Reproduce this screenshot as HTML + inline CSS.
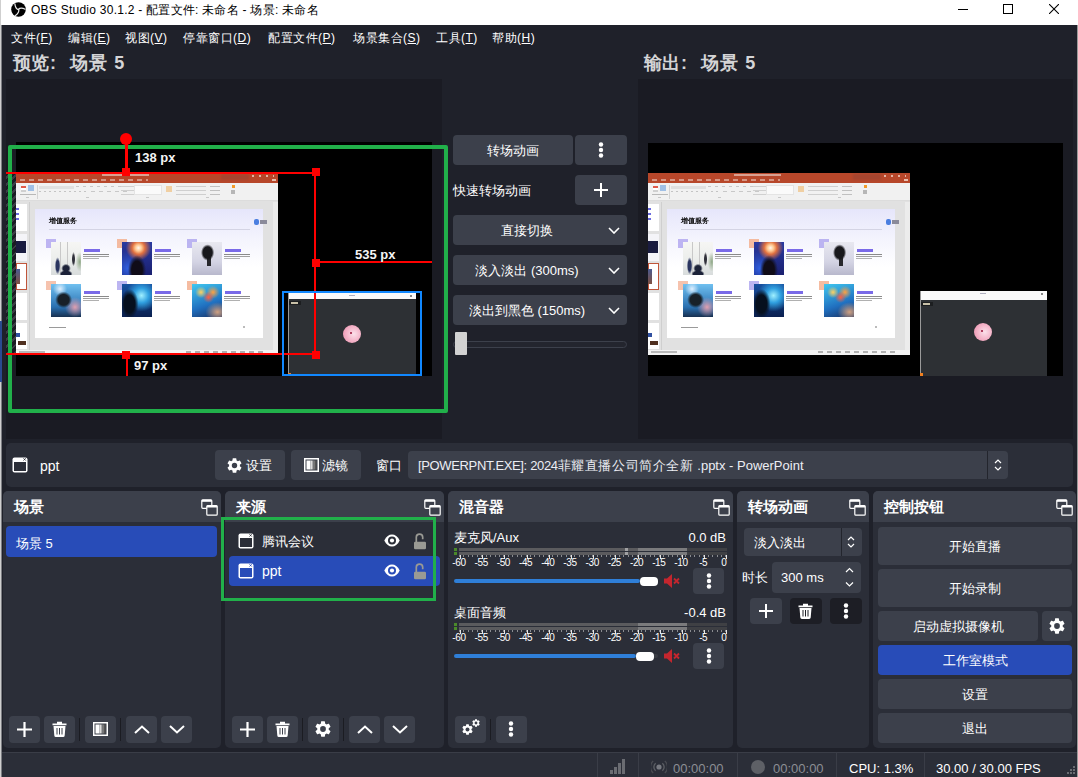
<!DOCTYPE html><html><head><meta charset="utf-8"><style>*{box-sizing:border-box;margin:0;padding:0}
html,body{width:1078px;height:777px;overflow:hidden;background:#1f212a}
body{position:relative;font-family:"Liberation Sans",sans-serif;color:#fff;font-size:12px}
.a{position:absolute}
.btn{position:absolute;background:#3c404b;border-radius:4px}
.t{position:absolute;white-space:nowrap;line-height:1;padding-top:1px}
.lbl{position:absolute;white-space:nowrap;font-size:13px;font-weight:bold;color:#f4f4f4;line-height:13px;text-shadow:0 0 2px #000}
.dock{position:absolute;top:491px;height:257px;background:#2b2e38;border-radius:5px;overflow:hidden}
.dt{position:absolute;left:0;right:0;top:0;height:31px;background:#3c404b}
.dtt{position:absolute;top:8px;font-size:15px;font-weight:bold;line-height:1;color:#fff}
.m{position:absolute;white-space:nowrap;font-size:12px;color:#fff;line-height:13px;top:32px;letter-spacing:0.5px}
</style></head><body>
<div class="a" style="left:0;top:0;width:1px;height:777px;background:#cfcfcf"></div><div class="a" style="left:1px;top:0;width:1px;height:777px;background:#7c7d82"></div><div class="a" style="left:0;top:321px;width:2px;height:61px;background:#2a4a90"></div><div class="a" style="left:1077px;top:0;width:1px;height:777px;background:#9a9a9a"></div><div class="a" style="left:0;top:0;width:1078px;height:25px;background:#fff"></div><div class="a" style="left:0;top:0;width:1px;height:25px;background:#cfcfcf"></div><svg class="a" style="left:11px;top:2px" width="15" height="15" viewBox="-7.5 -7.5 15 15"><circle r="7.3" fill="#000"/><g fill="none" stroke="#e8e8e8" stroke-width="1.2" stroke-linecap="round"><path id="bl" d="M0 0.3Q-3.2 -0.8 -3.6 -5.6"/><use href="#bl" transform="rotate(120)"/><use href="#bl" transform="rotate(240)"/></g></svg><div class="t" style="left:31px;top:3px;font-size:12px;color:#000;line-height:13px;letter-spacing:0.25px">OBS Studio 30.1.2 - 配置文件: 未命名 - 场景: 未命名</div><div class="a" style="left:958px;top:9px;width:10px;height:1px;background:#000"></div><div class="a" style="left:1003px;top:4px;width:10px;height:10px;border:1px solid #000"></div><svg class="a" style="left:1049px;top:4px" width="10" height="10" viewBox="0 0 10 10"><path d="M0 0L10 10M10 0L0 10" stroke="#000" stroke-width="1.1"/></svg><div class="m" style="left:11px">文件(<u>F</u>)</div><div class="m" style="left:68px">编辑(<u>E</u>)</div><div class="m" style="left:125px">视图(<u>V</u>)</div><div class="m" style="left:183px">停靠窗口(<u>D</u>)</div><div class="m" style="left:268px">配置文件(<u>P</u>)</div><div class="m" style="left:353px">场景集合(<u>S</u>)</div><div class="m" style="left:436px">工具(<u>T</u>)</div><div class="m" style="left:492px">帮助(<u>H</u>)</div><div class="t" style="left:13px;top:53px;font-size:18px;font-weight:bold;color:#d4d4d6;line-height:18px;letter-spacing:0.4px">预览</div><div class="t" style="left:50px;top:53px;font-size:18px;font-weight:bold;color:#d4d4d6;line-height:18px;letter-spacing:0.4px">:</div><div class="t" style="left:70px;top:53px;font-size:18px;font-weight:bold;color:#d4d4d6;line-height:18px;letter-spacing:1.1px">场景 5</div><div class="t" style="left:644px;top:53px;font-size:18px;font-weight:bold;color:#d4d4d6;line-height:18px;letter-spacing:0.4px">输出</div><div class="t" style="left:681px;top:53px;font-size:18px;font-weight:bold;color:#d4d4d6;line-height:18px;letter-spacing:0.4px">:</div><div class="t" style="left:701px;top:53px;font-size:18px;font-weight:bold;color:#d4d4d6;line-height:18px;letter-spacing:1.1px">场景 5</div><div class="a" style="left:6px;top:79px;width:436px;height:360px;background:#1a1b23"></div><div class="a" style="left:638px;top:79px;width:435px;height:360px;background:#1a1b23"></div><div class="a" style="left:16px;top:142px;width:416px;height:234px;background:#000"></div><div class="a" style="left:648px;top:143px;width:415px;height:233px;background:#000"></div>
<div class="a" style="left:16px;top:142px;width:416px;height:234px;overflow:hidden"><div class="a" style="left:0px;top:31px;width:262px;height:182px;overflow:hidden;background:#e1e1e1;filter:blur(0.3px)"><div class="a" style="left:0px;top:0px;width:262px;height:10px;background:#b7472a"></div><div class="a" style="left:86px;top:1px;width:47px;height:2px;background:#d9a090"></div><div class="a" style="left:4px;top:6px;width:128px;height:2px;background:repeating-linear-gradient(90deg,#d69684 0 5px,transparent 5px 9px)"></div><div class="a" style="left:205px;top:1px;width:28px;height:6px;background:#a5452f;filter:blur(1px)"></div><div class="a" style="left:236px;top:2px;width:22px;height:2px;background:repeating-linear-gradient(90deg,#e4b4a4 0 2px,transparent 2px 7px)"></div><div class="a" style="left:256px;top:6px;width:4px;height:2px;background:#e8c0b0"></div><div class="a" style="left:0px;top:10px;width:262px;height:18px;background:#f1f1f1"></div><div class="a" style="left:5px;top:13px;width:5px;height:6px;background:linear-gradient(#e05a4a 0 30%,#fff 30% 60%,#d0d0d0 60%)"></div><div class="a" style="left:12px;top:12px;width:6px;height:6px;background:#6aa0e0;opacity:.6"></div><div class="a" style="left:4px;top:21px;width:16px;height:1px;background:#b8b8b8"></div><div class="a" style="left:21px;top:12px;width:1px;height:14px;background:#d4d4d4"></div><div class="a" style="left:23px;top:13px;width:35px;height:3px;background:#e0e0e0"></div><div class="a" style="left:23px;top:18px;width:50px;height:1px;background:repeating-linear-gradient(90deg,#c4c4c4 0 2px,transparent 2px 5px)"></div><div class="a" style="left:60px;top:13px;width:45px;height:1px;background:repeating-linear-gradient(90deg,#c8c8c8 0 3px,transparent 3px 7px)"></div><div class="a" style="left:75px;top:18px;width:40px;height:1px;background:repeating-linear-gradient(90deg,#c8c8c8 0 4px,transparent 4px 8px)"></div><div class="a" style="left:105px;top:13px;width:30px;height:9px;background:repeating-linear-gradient(180deg,#d0d0d0 0 1px,transparent 1px 4px)"></div><div class="a" style="left:118px;top:12px;width:28px;height:10px;background:#fafafa;border:1px solid #e4e4e4"></div><div class="a" style="left:150px;top:13px;width:6px;height:6px;background:#f0c080;opacity:.7"></div><div class="a" style="left:160px;top:13px;width:30px;height:9px;background:repeating-linear-gradient(180deg,#cfcfcf 0 1px,transparent 1px 4px)"></div><div class="a" style="left:194px;top:13px;width:10px;height:9px;background:repeating-linear-gradient(180deg,#c0c0c0 0 1px,transparent 1px 4px)"></div><div class="a" style="left:216px;top:12px;width:3px;height:3px;background:#f39a2a"></div><div class="a" style="left:215px;top:17px;width:4px;height:4px;background:#909090;opacity:.6"></div><div class="a" style="left:10px;top:24px;width:240px;height:1px;background:repeating-linear-gradient(90deg,#c8c8c8 0 3px,transparent 3px 60px)"></div><div class="a" style="left:0px;top:27px;width:262px;height:1px;background:#dcdcdc"></div><div class="a" style="left:0px;top:31px;width:11px;height:27px;background:#fff"></div><div class="a" style="left:0px;top:35px;width:3px;height:14px;background:repeating-linear-gradient(180deg,#6a6adf 0 2px,transparent 2px 5px)"></div><div class="a" style="left:0px;top:61px;width:11px;height:27px;background:#f4f4f8"></div><div class="a" style="left:0px;top:68px;width:10px;height:12px;background:#1a1c40"></div><div class="a" style="left:0px;top:90px;width:11px;height:27px;background:#fff;border:1px solid #c0553a"></div><div class="a" style="left:0px;top:96px;width:4px;height:15px;background:linear-gradient(#4a5a90,#805040)"></div><div class="a" style="left:0px;top:120px;width:11px;height:27px;background:#fff"></div><div class="a" style="left:0px;top:150px;width:11px;height:26px;background:#fff"></div><div class="a" style="left:0px;top:160px;width:4px;height:4px;background:#3050a0"></div><div class="a" style="left:2px;top:168px;width:8px;height:4px;background:#503020"></div><div class="a" style="left:13px;top:29px;width:1px;height:148px;background:#cfcfcf"></div><div class="a" style="left:257px;top:29px;width:5px;height:148px;background:#ececec"></div><div class="a" style="left:19px;top:36px;width:228px;height:129px;background:linear-gradient(180deg,#e6e6fb 0%,#f3f3fd 22%,#fff 45%,#fff 100%)"><div class="t" style="left:14px;top:7px;font-size:7px;line-height:8px;font-weight:bold;color:#000">增值服务</div><div class="a" style="left:14px;top:20px;width:201px;height:1px;background:#d4d4e4"></div><div class="a" style="left:219px;top:10px;width:5px;height:6px;background:#4a7ee0;border-radius:2px"></div><div class="a" style="left:225px;top:11px;width:7px;height:4px;background:#8a8a9a"></div><div class="a" style="left:10.6px;top:29.5px;width:10px;height:9px;background:#b3a8f0;opacity:.85"></div><div class="a" style="left:15.6px;top:32.5px;width:30px;height:33px;background:radial-gradient(ellipse 16% 14% at 50% 80%,#1c2238 0,#1c2238 60%,transparent 100%),radial-gradient(ellipse 22% 12% at 50% 97%,#1c2238 0,#1c2238 70%,transparent 100%),radial-gradient(ellipse 9% 26% at 22% 72%,#2a3560 0,#2a3560 60%,transparent 100%),radial-gradient(ellipse 6% 22% at 75% 52%,#30303a 0,#30303a 55%,transparent 100%),radial-gradient(ellipse 14% 30% at 96% 60%,#90a888 0,transparent 100%),linear-gradient(90deg,transparent 30%,#c8c8c8 30% 32%,transparent 32% 55%,#c8c8c8 55% 57%,transparent 57%),linear-gradient(180deg,#f6f6f4 0%,#eceeec 50%,#d8dcdc 100%)"></div><div class="a" style="left:48.6px;top:39.5px;width:16px;height:3px;background:#7a6ae8"></div><div class="a" style="left:47.6px;top:44.5px;width:26px;height:1px;background:#8a8a8a"></div><div class="a" style="left:47.6px;top:46.5px;width:26px;height:1px;background:#a0a0a0"></div><div class="a" style="left:47.6px;top:48.5px;width:16px;height:1px;background:#b0b0b0"></div><div class="a" style="left:82.0px;top:29.5px;width:10px;height:9px;background:#f3b090;opacity:.85"></div><div class="a" style="left:87.0px;top:32.5px;width:30px;height:33px;background:radial-gradient(ellipse 30% 45% at 50% 85%,#100c18 0,#100c18 60%,transparent 100%),radial-gradient(circle at 55% 18%,#fff8f0 0,#ffc890 10%,#e07040 20%,transparent 40%),radial-gradient(circle at 20% 80%,#3060e0 0,transparent 50%),linear-gradient(180deg,#2a3aa0,#1a2070)"></div><div class="a" style="left:120.0px;top:39.5px;width:16px;height:3px;background:#7a6ae8"></div><div class="a" style="left:119.0px;top:44.5px;width:26px;height:1px;background:#8a8a8a"></div><div class="a" style="left:119.0px;top:46.5px;width:26px;height:1px;background:#a0a0a0"></div><div class="a" style="left:119.0px;top:48.5px;width:16px;height:1px;background:#b0b0b0"></div><div class="a" style="left:152.0px;top:29.5px;width:10px;height:9px;background:#b0a8ee;opacity:.85"></div><div class="a" style="left:157.0px;top:32.5px;width:30px;height:33px;background:radial-gradient(ellipse 22% 25% at 52% 32%,#18181c 0,#18181c 70%,transparent 100%),linear-gradient(90deg,transparent 50%,#28282c 50%,#28282c 62%,transparent 62%) 0 60%/100% 40% no-repeat,linear-gradient(180deg,#e8e8f0 0%,#d4d4e4 60%,#b8b8cc 100%)"></div><div class="a" style="left:190.0px;top:39.5px;width:16px;height:3px;background:#7a6ae8"></div><div class="a" style="left:189.0px;top:44.5px;width:26px;height:1px;background:#8a8a8a"></div><div class="a" style="left:189.0px;top:46.5px;width:26px;height:1px;background:#a0a0a0"></div><div class="a" style="left:189.0px;top:48.5px;width:16px;height:1px;background:#b0b0b0"></div><div class="a" style="left:10.6px;top:72.0px;width:10px;height:9px;background:#f4b8a0;opacity:.85"></div><div class="a" style="left:15.6px;top:75.0px;width:30px;height:33px;background:radial-gradient(ellipse 28% 25% at 42% 48%,#182028 0,#182028 65%,transparent 100%),radial-gradient(circle at 30% 15%,#e0f0ff 0,transparent 20%),radial-gradient(circle at 80% 70%,#e0a0b0 0,transparent 30%),linear-gradient(180deg,#70c0f0,#2a70b0 70%,#183050)"></div><div class="a" style="left:48.6px;top:82.0px;width:16px;height:3px;background:#7a6ae8"></div><div class="a" style="left:47.6px;top:87.0px;width:26px;height:1px;background:#8a8a8a"></div><div class="a" style="left:47.6px;top:89.0px;width:26px;height:1px;background:#a0a0a0"></div><div class="a" style="left:47.6px;top:91.0px;width:16px;height:1px;background:#b0b0b0"></div><div class="a" style="left:82.0px;top:72.0px;width:10px;height:9px;background:#b0a8ef;opacity:.85"></div><div class="a" style="left:87.0px;top:75.0px;width:30px;height:33px;background:radial-gradient(ellipse 30% 45% at 25% 60%,#06101e 0,#06101e 60%,transparent 100%),radial-gradient(circle at 65% 35%,#a0f0ff 0,#30a0e0 25%,transparent 55%),linear-gradient(180deg,#1850a0,#0a2050)"></div><div class="a" style="left:120.0px;top:82.0px;width:16px;height:3px;background:#7a6ae8"></div><div class="a" style="left:119.0px;top:87.0px;width:26px;height:1px;background:#8a8a8a"></div><div class="a" style="left:119.0px;top:89.0px;width:26px;height:1px;background:#a0a0a0"></div><div class="a" style="left:119.0px;top:91.0px;width:16px;height:1px;background:#b0b0b0"></div><div class="a" style="left:152.0px;top:72.0px;width:10px;height:9px;background:#f3b090;opacity:.85"></div><div class="a" style="left:157.0px;top:75.0px;width:30px;height:33px;background:radial-gradient(circle at 30% 25%,#ffd060 0,transparent 18%),radial-gradient(circle at 55% 40%,#ff6040 0,transparent 22%),radial-gradient(circle at 70% 25%,#ffa040 0,transparent 20%),radial-gradient(ellipse 40% 30% at 85% 85%,#d0a080 0,transparent 100%),linear-gradient(160deg,#40c8f0,#2070c0 60%,#1a3060)"></div><div class="a" style="left:190.0px;top:82.0px;width:16px;height:3px;background:#7a6ae8"></div><div class="a" style="left:189.0px;top:87.0px;width:26px;height:1px;background:#8a8a8a"></div><div class="a" style="left:189.0px;top:89.0px;width:26px;height:1px;background:#a0a0a0"></div><div class="a" style="left:189.0px;top:91.0px;width:16px;height:1px;background:#b0b0b0"></div><div class="a" style="left:14px;top:118px;width:17px;height:1px;background:#9a9a9a"></div><div class="a" style="left:208px;top:117px;width:2px;height:2px;background:#bbb"></div></div><div class="a" style="left:0px;top:177px;width:262px;height:5px;background:#f3f3f3"></div><div class="a" style="left:3px;top:178px;width:26px;height:2px;background:#b8b8b8"></div><div class="a" style="left:170px;top:178px;width:80px;height:2px;background:repeating-linear-gradient(90deg,#b0b0b0 0 5px,transparent 5px 9px)"></div></div><div class="a" style="left:272px;top:151px;width:128px;height:83px;background:#2d3034;overflow:hidden"><div class="a" style="left:0px;top:0px;width:128px;height:6px;background:#fafafa"></div><div class="a" style="left:0px;top:0px;width:1px;height:83px;background:#9a9a9a"></div><div class="a" style="left:61px;top:2px;width:6px;height:1px;background:#b0b0c0"></div><div class="a" style="left:122px;top:2px;width:2px;height:2px;background:#888"></div><div class="a" style="left:1px;top:8px;width:12px;height:4px;background:#1c1e20"></div><div class="a" style="left:3px;top:9px;width:7px;height:2px;background:#c8c0a8"></div><div class="a" style="left:55px;top:32px;width:18px;height:18px;border-radius:50%;background:radial-gradient(circle at 60% 50%,#fbe0ea 0,#f5b8cc 45%,#e88aa8 100%)"></div><div class="a" style="left:62px;top:39px;width:2px;height:2px;background:#b04060"></div><div class="a" style="left:0px;top:80px;width:3px;height:3px;background:#f08020"></div></div></div><div class="a" style="left:6px;top:172px;width:10px;height:182px;background:repeating-linear-gradient(135deg,#1a1b23 0 3px,#3b3d45 3px 5px)"></div><div class="a" style="left:8px;top:145px;width:440px;height:268px;border:4px solid #21b04a;border-radius:2px"></div><div class="a" style="left:6px;top:172px;width:310px;height:2px;background:#f00"></div><div class="a" style="left:6px;top:353px;width:310px;height:2px;background:#f00"></div><div class="a" style="left:314px;top:172px;width:2px;height:183px;background:#f00"></div><div class="a" style="left:316px;top:261px;width:116px;height:2px;background:#f00"></div><div class="a" style="left:125px;top:140px;width:3px;height:33px;background:#f00"></div><div class="a" style="left:126px;top:355px;width:2px;height:21px;background:#f00"></div><div class="a" style="left:120px;top:133px;width:12px;height:12px;border-radius:50%;background:#f00"></div><div class="a" style="left:122px;top:168px;width:8px;height:8px;background:#f00"></div><div class="a" style="left:312px;top:168px;width:8px;height:8px;background:#f00"></div><div class="a" style="left:312px;top:259px;width:8px;height:8px;background:#f00"></div><div class="a" style="left:122px;top:351px;width:8px;height:8px;background:#f00"></div><div class="a" style="left:312px;top:351px;width:8px;height:8px;background:#f00"></div><div class="a" style="left:282px;top:291px;width:140px;height:85px;border:2px solid #1188ff"></div><div class="lbl" style="left:135px;top:151px">138 px</div><div class="lbl" style="left:355px;top:248px">535 px</div><div class="lbl" style="left:134px;top:359px">97 px</div><div class="a" style="left:648px;top:143px;width:415px;height:233px;overflow:hidden"><div class="a" style="left:0px;top:30px;width:262px;height:182px;overflow:hidden;background:#e1e1e1;filter:blur(0.3px)"><div class="a" style="left:0px;top:0px;width:262px;height:10px;background:#b7472a"></div><div class="a" style="left:86px;top:1px;width:47px;height:2px;background:#d9a090"></div><div class="a" style="left:4px;top:6px;width:128px;height:2px;background:repeating-linear-gradient(90deg,#d69684 0 5px,transparent 5px 9px)"></div><div class="a" style="left:205px;top:1px;width:28px;height:6px;background:#a5452f;filter:blur(1px)"></div><div class="a" style="left:236px;top:2px;width:22px;height:2px;background:repeating-linear-gradient(90deg,#e4b4a4 0 2px,transparent 2px 7px)"></div><div class="a" style="left:256px;top:6px;width:4px;height:2px;background:#e8c0b0"></div><div class="a" style="left:0px;top:10px;width:262px;height:18px;background:#f1f1f1"></div><div class="a" style="left:5px;top:13px;width:5px;height:6px;background:linear-gradient(#e05a4a 0 30%,#fff 30% 60%,#d0d0d0 60%)"></div><div class="a" style="left:12px;top:12px;width:6px;height:6px;background:#6aa0e0;opacity:.6"></div><div class="a" style="left:4px;top:21px;width:16px;height:1px;background:#b8b8b8"></div><div class="a" style="left:21px;top:12px;width:1px;height:14px;background:#d4d4d4"></div><div class="a" style="left:23px;top:13px;width:35px;height:3px;background:#e0e0e0"></div><div class="a" style="left:23px;top:18px;width:50px;height:1px;background:repeating-linear-gradient(90deg,#c4c4c4 0 2px,transparent 2px 5px)"></div><div class="a" style="left:60px;top:13px;width:45px;height:1px;background:repeating-linear-gradient(90deg,#c8c8c8 0 3px,transparent 3px 7px)"></div><div class="a" style="left:75px;top:18px;width:40px;height:1px;background:repeating-linear-gradient(90deg,#c8c8c8 0 4px,transparent 4px 8px)"></div><div class="a" style="left:105px;top:13px;width:30px;height:9px;background:repeating-linear-gradient(180deg,#d0d0d0 0 1px,transparent 1px 4px)"></div><div class="a" style="left:118px;top:12px;width:28px;height:10px;background:#fafafa;border:1px solid #e4e4e4"></div><div class="a" style="left:150px;top:13px;width:6px;height:6px;background:#f0c080;opacity:.7"></div><div class="a" style="left:160px;top:13px;width:30px;height:9px;background:repeating-linear-gradient(180deg,#cfcfcf 0 1px,transparent 1px 4px)"></div><div class="a" style="left:194px;top:13px;width:10px;height:9px;background:repeating-linear-gradient(180deg,#c0c0c0 0 1px,transparent 1px 4px)"></div><div class="a" style="left:216px;top:12px;width:3px;height:3px;background:#f39a2a"></div><div class="a" style="left:215px;top:17px;width:4px;height:4px;background:#909090;opacity:.6"></div><div class="a" style="left:10px;top:24px;width:240px;height:1px;background:repeating-linear-gradient(90deg,#c8c8c8 0 3px,transparent 3px 60px)"></div><div class="a" style="left:0px;top:27px;width:262px;height:1px;background:#dcdcdc"></div><div class="a" style="left:0px;top:31px;width:11px;height:27px;background:#fff"></div><div class="a" style="left:0px;top:35px;width:3px;height:14px;background:repeating-linear-gradient(180deg,#6a6adf 0 2px,transparent 2px 5px)"></div><div class="a" style="left:0px;top:61px;width:11px;height:27px;background:#f4f4f8"></div><div class="a" style="left:0px;top:68px;width:10px;height:12px;background:#1a1c40"></div><div class="a" style="left:0px;top:90px;width:11px;height:27px;background:#fff;border:1px solid #c0553a"></div><div class="a" style="left:0px;top:96px;width:4px;height:15px;background:linear-gradient(#4a5a90,#805040)"></div><div class="a" style="left:0px;top:120px;width:11px;height:27px;background:#fff"></div><div class="a" style="left:0px;top:150px;width:11px;height:26px;background:#fff"></div><div class="a" style="left:0px;top:160px;width:4px;height:4px;background:#3050a0"></div><div class="a" style="left:2px;top:168px;width:8px;height:4px;background:#503020"></div><div class="a" style="left:13px;top:29px;width:1px;height:148px;background:#cfcfcf"></div><div class="a" style="left:257px;top:29px;width:5px;height:148px;background:#ececec"></div><div class="a" style="left:19px;top:36px;width:228px;height:129px;background:linear-gradient(180deg,#e6e6fb 0%,#f3f3fd 22%,#fff 45%,#fff 100%)"><div class="t" style="left:14px;top:7px;font-size:7px;line-height:8px;font-weight:bold;color:#000">增值服务</div><div class="a" style="left:14px;top:20px;width:201px;height:1px;background:#d4d4e4"></div><div class="a" style="left:219px;top:10px;width:5px;height:6px;background:#4a7ee0;border-radius:2px"></div><div class="a" style="left:225px;top:11px;width:7px;height:4px;background:#8a8a9a"></div><div class="a" style="left:10.6px;top:29.5px;width:10px;height:9px;background:#b3a8f0;opacity:.85"></div><div class="a" style="left:15.6px;top:32.5px;width:30px;height:33px;background:radial-gradient(ellipse 16% 14% at 50% 80%,#1c2238 0,#1c2238 60%,transparent 100%),radial-gradient(ellipse 22% 12% at 50% 97%,#1c2238 0,#1c2238 70%,transparent 100%),radial-gradient(ellipse 9% 26% at 22% 72%,#2a3560 0,#2a3560 60%,transparent 100%),radial-gradient(ellipse 6% 22% at 75% 52%,#30303a 0,#30303a 55%,transparent 100%),radial-gradient(ellipse 14% 30% at 96% 60%,#90a888 0,transparent 100%),linear-gradient(90deg,transparent 30%,#c8c8c8 30% 32%,transparent 32% 55%,#c8c8c8 55% 57%,transparent 57%),linear-gradient(180deg,#f6f6f4 0%,#eceeec 50%,#d8dcdc 100%)"></div><div class="a" style="left:48.6px;top:39.5px;width:16px;height:3px;background:#7a6ae8"></div><div class="a" style="left:47.6px;top:44.5px;width:26px;height:1px;background:#8a8a8a"></div><div class="a" style="left:47.6px;top:46.5px;width:26px;height:1px;background:#a0a0a0"></div><div class="a" style="left:47.6px;top:48.5px;width:16px;height:1px;background:#b0b0b0"></div><div class="a" style="left:82.0px;top:29.5px;width:10px;height:9px;background:#f3b090;opacity:.85"></div><div class="a" style="left:87.0px;top:32.5px;width:30px;height:33px;background:radial-gradient(ellipse 30% 45% at 50% 85%,#100c18 0,#100c18 60%,transparent 100%),radial-gradient(circle at 55% 18%,#fff8f0 0,#ffc890 10%,#e07040 20%,transparent 40%),radial-gradient(circle at 20% 80%,#3060e0 0,transparent 50%),linear-gradient(180deg,#2a3aa0,#1a2070)"></div><div class="a" style="left:120.0px;top:39.5px;width:16px;height:3px;background:#7a6ae8"></div><div class="a" style="left:119.0px;top:44.5px;width:26px;height:1px;background:#8a8a8a"></div><div class="a" style="left:119.0px;top:46.5px;width:26px;height:1px;background:#a0a0a0"></div><div class="a" style="left:119.0px;top:48.5px;width:16px;height:1px;background:#b0b0b0"></div><div class="a" style="left:152.0px;top:29.5px;width:10px;height:9px;background:#b0a8ee;opacity:.85"></div><div class="a" style="left:157.0px;top:32.5px;width:30px;height:33px;background:radial-gradient(ellipse 22% 25% at 52% 32%,#18181c 0,#18181c 70%,transparent 100%),linear-gradient(90deg,transparent 50%,#28282c 50%,#28282c 62%,transparent 62%) 0 60%/100% 40% no-repeat,linear-gradient(180deg,#e8e8f0 0%,#d4d4e4 60%,#b8b8cc 100%)"></div><div class="a" style="left:190.0px;top:39.5px;width:16px;height:3px;background:#7a6ae8"></div><div class="a" style="left:189.0px;top:44.5px;width:26px;height:1px;background:#8a8a8a"></div><div class="a" style="left:189.0px;top:46.5px;width:26px;height:1px;background:#a0a0a0"></div><div class="a" style="left:189.0px;top:48.5px;width:16px;height:1px;background:#b0b0b0"></div><div class="a" style="left:10.6px;top:72.0px;width:10px;height:9px;background:#f4b8a0;opacity:.85"></div><div class="a" style="left:15.6px;top:75.0px;width:30px;height:33px;background:radial-gradient(ellipse 28% 25% at 42% 48%,#182028 0,#182028 65%,transparent 100%),radial-gradient(circle at 30% 15%,#e0f0ff 0,transparent 20%),radial-gradient(circle at 80% 70%,#e0a0b0 0,transparent 30%),linear-gradient(180deg,#70c0f0,#2a70b0 70%,#183050)"></div><div class="a" style="left:48.6px;top:82.0px;width:16px;height:3px;background:#7a6ae8"></div><div class="a" style="left:47.6px;top:87.0px;width:26px;height:1px;background:#8a8a8a"></div><div class="a" style="left:47.6px;top:89.0px;width:26px;height:1px;background:#a0a0a0"></div><div class="a" style="left:47.6px;top:91.0px;width:16px;height:1px;background:#b0b0b0"></div><div class="a" style="left:82.0px;top:72.0px;width:10px;height:9px;background:#b0a8ef;opacity:.85"></div><div class="a" style="left:87.0px;top:75.0px;width:30px;height:33px;background:radial-gradient(ellipse 30% 45% at 25% 60%,#06101e 0,#06101e 60%,transparent 100%),radial-gradient(circle at 65% 35%,#a0f0ff 0,#30a0e0 25%,transparent 55%),linear-gradient(180deg,#1850a0,#0a2050)"></div><div class="a" style="left:120.0px;top:82.0px;width:16px;height:3px;background:#7a6ae8"></div><div class="a" style="left:119.0px;top:87.0px;width:26px;height:1px;background:#8a8a8a"></div><div class="a" style="left:119.0px;top:89.0px;width:26px;height:1px;background:#a0a0a0"></div><div class="a" style="left:119.0px;top:91.0px;width:16px;height:1px;background:#b0b0b0"></div><div class="a" style="left:152.0px;top:72.0px;width:10px;height:9px;background:#f3b090;opacity:.85"></div><div class="a" style="left:157.0px;top:75.0px;width:30px;height:33px;background:radial-gradient(circle at 30% 25%,#ffd060 0,transparent 18%),radial-gradient(circle at 55% 40%,#ff6040 0,transparent 22%),radial-gradient(circle at 70% 25%,#ffa040 0,transparent 20%),radial-gradient(ellipse 40% 30% at 85% 85%,#d0a080 0,transparent 100%),linear-gradient(160deg,#40c8f0,#2070c0 60%,#1a3060)"></div><div class="a" style="left:190.0px;top:82.0px;width:16px;height:3px;background:#7a6ae8"></div><div class="a" style="left:189.0px;top:87.0px;width:26px;height:1px;background:#8a8a8a"></div><div class="a" style="left:189.0px;top:89.0px;width:26px;height:1px;background:#a0a0a0"></div><div class="a" style="left:189.0px;top:91.0px;width:16px;height:1px;background:#b0b0b0"></div><div class="a" style="left:14px;top:118px;width:17px;height:1px;background:#9a9a9a"></div><div class="a" style="left:208px;top:117px;width:2px;height:2px;background:#bbb"></div></div><div class="a" style="left:0px;top:177px;width:262px;height:5px;background:#f3f3f3"></div><div class="a" style="left:3px;top:178px;width:26px;height:2px;background:#b8b8b8"></div><div class="a" style="left:170px;top:178px;width:80px;height:2px;background:repeating-linear-gradient(90deg,#b0b0b0 0 5px,transparent 5px 9px)"></div></div><div class="a" style="left:272px;top:148px;width:127px;height:85px;background:#2d3034;overflow:hidden"><div class="a" style="left:0px;top:0px;width:127px;height:9px;background:#fafafa"></div><div class="a" style="left:0px;top:0px;width:1px;height:85px;background:#9a9a9a"></div><div class="a" style="left:60px;top:2px;width:6px;height:1px;background:#b0b0c0"></div><div class="a" style="left:121px;top:2px;width:2px;height:2px;background:#888"></div><div class="a" style="left:1px;top:11px;width:12px;height:4px;background:#1c1e20"></div><div class="a" style="left:3px;top:12px;width:7px;height:2px;background:#c8c0a8"></div><div class="a" style="left:54px;top:32px;width:18px;height:18px;border-radius:50%;background:radial-gradient(circle at 60% 50%,#fbe0ea 0,#f5b8cc 45%,#e88aa8 100%)"></div><div class="a" style="left:61px;top:39px;width:2px;height:2px;background:#b04060"></div><div class="a" style="left:0px;top:82px;width:3px;height:3px;background:#f08020"></div></div></div>
<div class="btn" style="left:453px;top:135px;width:120px;height:30px"></div><div class="t" style="left:453px;top:143px;width:120px;text-align:center;font-size:13px;color:#fff;line-height:14px">转场动画</div><div class="btn" style="left:575px;top:135px;width:52px;height:30px"></div><svg class="a" style="left:598px;top:142px" width="6" height="16" viewBox="0 0 6 16"><circle cx="3" cy="2.5" r="2.2" fill="#fff"/><circle cx="3" cy="8.0" r="2.2" fill="#fff"/><circle cx="3" cy="13.5" r="2.2" fill="#fff"/></svg><div class="t" style="left:453px;top:183px;font-size:13px;color:#fff;line-height:14px">快速转场动画</div><div class="btn" style="left:575px;top:175px;width:52px;height:30px"></div><svg class="a" style="left:594px;top:183px" width="14" height="14" viewBox="0 0 14 14"><path d="M7.0 0V14M0 7.0H14" stroke="#fff" stroke-width="2"/></svg><div class="btn" style="left:453px;top:215px;width:174px;height:30px"></div><div class="t" style="left:453px;top:223px;width:148px;text-align:center;font-size:13px;color:#fff;line-height:14px">直接切换</div><svg class="a" style="left:608px;top:227px" width="12" height="7" viewBox="0 0 12 7"><path d="M1 1L6 6L11 1" fill="none" stroke="#fff" stroke-width="1.6"/></svg><div class="btn" style="left:453px;top:255px;width:174px;height:30px"></div><div class="t" style="left:453px;top:263px;width:148px;text-align:center;font-size:13px;color:#fff;line-height:14px">淡入淡出 (300ms)</div><svg class="a" style="left:608px;top:267px" width="12" height="7" viewBox="0 0 12 7"><path d="M1 1L6 6L11 1" fill="none" stroke="#fff" stroke-width="1.6"/></svg><div class="btn" style="left:453px;top:295px;width:174px;height:30px"></div><div class="t" style="left:453px;top:303px;width:148px;text-align:center;font-size:13px;color:#fff;line-height:14px">淡出到黑色 (150ms)</div><svg class="a" style="left:608px;top:307px" width="12" height="7" viewBox="0 0 12 7"><path d="M1 1L6 6L11 1" fill="none" stroke="#fff" stroke-width="1.6"/></svg><div class="a" style="left:453px;top:341px;width:174px;height:7px;border:1px solid #3c404b;border-radius:4px;background:#23252e"></div><div class="a" style="left:455px;top:332px;width:12px;height:23px;background:#d2d2d2;border-radius:1px"></div>
<div class="a" style="left:6px;top:443px;width:1067px;height:44px;background:#2b2e38;border-radius:5px"></div><svg class="a" style="left:12px;top:457px" width="16" height="16" viewBox="0 0 16 16"><rect x="0.5" y="0.5" width="15" height="15" rx="2" fill="#fff"/><rect x="2" y="5" width="12" height="9" fill="#2b2e38"/><path d="M11.5 1.3L13.7 3.5M13.7 1.3L11.5 3.5" stroke="#2b2e38" stroke-width="0.9"/></svg><div class="t" style="left:40px;top:458px;font-size:14px;color:#fff;line-height:15px">ppt</div><div class="btn" style="left:215px;top:450px;width:70px;height:30px"></div><svg class="a" style="left:227px;top:458px" width="15" height="15" viewBox="2 2 20 20"><path fill="#fff" d="M19.14 12.94c.04-.3.06-.61.06-.94 0-.32-.02-.64-.07-.94l2.03-1.58a.49.49 0 0 0 .12-.61l-1.92-3.32a.49.49 0 0 0-.59-.22l-2.39.96c-.5-.38-1.03-.7-1.62-.94l-.36-2.54a.48.48 0 0 0-.48-.41h-3.84c-.24 0-.43.17-.47.41l-.36 2.54c-.59.24-1.13.57-1.62.94l-2.39-.96a.48.48 0 0 0-.59.22L2.74 8.87c-.12.21-.08.47.12.61l2.03 1.58c-.05.3-.09.63-.09.94s.02.64.07.94l-2.03 1.58a.49.49 0 0 0-.12.61l1.92 3.32c.12.22.37.29.59.22l2.39-.96c.5.38 1.03.7 1.62.94l.36 2.54c.05.24.24.41.48.41h3.84c.24 0 .44-.17.47-.41l.36-2.54c.59-.24 1.13-.56 1.62-.94l2.39.96c.22.08.47 0 .59-.22l1.92-3.32c.12-.22.07-.47-.12-.61l-2.01-1.58z"/><circle cx="12" cy="12" r="3.6" fill="#3c404b"/></svg><div class="t" style="left:246px;top:458px;font-size:13px;color:#fff;line-height:14px">设置</div><div class="btn" style="left:291px;top:450px;width:70px;height:30px"></div><svg class="a" style="left:304px;top:458px" width="15" height="14" viewBox="0 0 15 14"><rect x="0.75" y="0.75" width="13.5" height="12.5" fill="none" stroke="#fff" stroke-width="1.5"/><rect x="2.5" y="2.5" width="4" height="9" fill="#fff"/><rect x="6.5" y="2.5" width="1.5" height="9" fill="#ddd"/><rect x="8" y="2.5" width="1.5" height="9" fill="#aaa"/><rect x="9.5" y="2.5" width="1.5" height="9" fill="#777"/><rect x="11" y="2.5" width="1.5" height="9" fill="#555"/></svg><div class="t" style="left:322px;top:458px;font-size:13px;color:#fff;line-height:14px">滤镜</div><div class="t" style="left:376px;top:458px;font-size:13px;color:#fff;line-height:14px">窗口</div><div class="btn" style="left:408px;top:451px;width:600px;height:28px"></div><div class="a" style="left:987px;top:451px;width:1px;height:28px;background:#23252d"></div><svg class="a" style="left:994px;top:458px" width="8" height="14" viewBox="0 0 8 14"><path d="M1 5L4 2L7 5M1 9L4 12L7 9" fill="none" stroke="#fff" stroke-width="1.2"/></svg><div class="t" style="left:418px;top:458px;font-size:13px;color:#eceef4;line-height:14px"><span style="letter-spacing:-0.35px">[POWERPNT.EXE]: 2024</span><span style="letter-spacing:0.6px">菲耀直播公司简介全新</span> .pptx - PowerPoint</div>
<div class="dock" style="left:3px;width:218px"><div class="dt"></div><div class="dtt" style="left:11px">场景</div></div><svg class="a" style="left:201px;top:499px" width="17" height="17" viewBox="0 0 17 17"><rect x="0.8" y="0.8" width="10" height="8.5" rx="1" fill="none" stroke="#fff" stroke-width="1.2"/><rect x="0.8" y="0.8" width="10" height="2" fill="#fff"/><rect x="5.8" y="6.5" width="10.4" height="9.7" rx="1" fill="#3c404b" stroke="#fff" stroke-width="1.2"/><rect x="5.8" y="6.5" width="10.4" height="2" fill="#fff"/></svg><div class="a" style="left:6px;top:526px;width:211px;height:31px;background:#284cb8;border-radius:4px"></div><div class="t" style="left:16px;top:536px;font-size:13px;color:#fff;line-height:14px;">场景 5</div><div class="btn" style="left:9px;top:716px;width:31px;height:27px"></div><div class="btn" style="left:44px;top:716px;width:31px;height:27px"></div><div class="btn" style="left:85px;top:716px;width:31px;height:27px"></div><div class="btn" style="left:126px;top:716px;width:31px;height:27px"></div><div class="btn" style="left:161px;top:716px;width:31px;height:27px"></div><svg class="a" style="left:17px;top:722px" width="15" height="15" viewBox="0 0 15 15"><path d="M7.5 0V15M0 7.5H15" stroke="#fff" stroke-width="2.2"/></svg><svg class="a" style="left:52px;top:721px" width="15" height="16" viewBox="0 0 15 16"><path d="M5 0.8h5v1.6h4.5v1.8h-14v-1.8h4.5z" fill="#fff"/><path d="M1.5 5h12l-0.8 9.5a1.6 1.6 0 0 1-1.6 1.5h-7.2a1.6 1.6 0 0 1-1.6-1.5z" fill="#fff"/><path d="M5 7v6.5M7.5 7v6.5M10 7v6.5" stroke="#3c404b" stroke-width="1"/></svg><div class="a" style="left:79px;top:718px;width:1px;height:23px;background:#1b1c22"></div><svg class="a" style="left:93px;top:722px" width="15" height="14" viewBox="0 0 15 14"><rect x="0.75" y="0.75" width="13.5" height="12.5" fill="none" stroke="#fff" stroke-width="1.5"/><rect x="2.5" y="2.5" width="4" height="9" fill="#fff"/><rect x="6.5" y="2.5" width="1.5" height="9" fill="#ddd"/><rect x="8" y="2.5" width="1.5" height="9" fill="#aaa"/><rect x="9.5" y="2.5" width="1.5" height="9" fill="#777"/><rect x="11" y="2.5" width="1.5" height="9" fill="#555"/></svg><div class="a" style="left:120px;top:718px;width:1px;height:23px;background:#1b1c22"></div><svg class="a" style="left:134px;top:725px" width="16" height="9" viewBox="0 0 16 9"><path d="M1 8L8 1.5L15 8" fill="none" stroke="#fff" stroke-width="2"/></svg><svg class="a" style="left:169px;top:725px" width="16" height="9" viewBox="0 0 16 9"><path d="M1 1L8 7.5L15 1" fill="none" stroke="#fff" stroke-width="2"/></svg><div class="dock" style="left:225px;width:219px"><div class="dt"></div><div class="dtt" style="left:11px">来源</div></div><svg class="a" style="left:424px;top:499px" width="17" height="17" viewBox="0 0 17 17"><rect x="0.8" y="0.8" width="10" height="8.5" rx="1" fill="none" stroke="#fff" stroke-width="1.2"/><rect x="0.8" y="0.8" width="10" height="2" fill="#fff"/><rect x="5.8" y="6.5" width="10.4" height="9.7" rx="1" fill="#3c404b" stroke="#fff" stroke-width="1.2"/><rect x="5.8" y="6.5" width="10.4" height="2" fill="#fff"/></svg><div class="a" style="left:229px;top:556px;width:211px;height:30px;background:#284cb8;border-radius:4px"></div><svg class="a" style="left:238px;top:533px" width="16" height="16" viewBox="0 0 16 16"><rect x="0.5" y="0.5" width="15" height="15" rx="2" fill="#fff"/><rect x="2" y="5" width="12" height="9" fill="#2b2e38"/><path d="M11.5 1.3L13.7 3.5M13.7 1.3L11.5 3.5" stroke="#2b2e38" stroke-width="0.9"/></svg><div class="t" style="left:262px;top:534px;font-size:13px;color:#fff;line-height:14px;">腾讯会议</div><svg class="a" style="left:384px;top:534px" width="16" height="13" viewBox="0 0 16 13"><path d="M0.3 6.5C2.3 2.3 5 0.5 8 0.5S13.7 2.3 15.7 6.5C13.7 10.7 11 12.5 8 12.5S2.3 10.7 0.3 6.5Z" fill="#fff"/><circle cx="8" cy="6.5" r="4" fill="#2b2e38"/><circle cx="8" cy="6.5" r="2.1" fill="#fff"/></svg><svg class="a" style="left:413px;top:533px" width="14" height="17" viewBox="0 0 14 17"><path d="M3.3 9V4.3a3.2 3.2 0 0 1 6.4 0V6.3" fill="none" stroke="#9a9a94" stroke-width="1.7"/><rect x="1" y="8.7" width="12" height="7.5" rx="1.2" fill="#9a9a94"/></svg><svg class="a" style="left:238px;top:563px" width="16" height="16" viewBox="0 0 16 16"><rect x="0.5" y="0.5" width="15" height="15" rx="2" fill="#fff"/><rect x="2" y="5" width="12" height="9" fill="#284cb8"/><path d="M11.5 1.3L13.7 3.5M13.7 1.3L11.5 3.5" stroke="#284cb8" stroke-width="0.9"/></svg><div class="t" style="left:262px;top:563px;font-size:14px;color:#fff;line-height:15px;">ppt</div><svg class="a" style="left:384px;top:564px" width="16" height="13" viewBox="0 0 16 13"><path d="M0.3 6.5C2.3 2.3 5 0.5 8 0.5S13.7 2.3 15.7 6.5C13.7 10.7 11 12.5 8 12.5S2.3 10.7 0.3 6.5Z" fill="#fff"/><circle cx="8" cy="6.5" r="4" fill="#284cb8"/><circle cx="8" cy="6.5" r="2.1" fill="#fff"/></svg><svg class="a" style="left:413px;top:563px" width="14" height="17" viewBox="0 0 14 17"><path d="M3.3 9V4.3a3.2 3.2 0 0 1 6.4 0V6.3" fill="none" stroke="#9a9a94" stroke-width="1.7"/><rect x="1" y="8.7" width="12" height="7.5" rx="1.2" fill="#9a9a94"/></svg><div class="a" style="left:221px;top:517px;width:215px;height:84px;border:3.5px solid #21b04a"></div><div class="btn" style="left:232px;top:716px;width:31px;height:27px"></div><div class="btn" style="left:267px;top:716px;width:31px;height:27px"></div><div class="btn" style="left:308px;top:716px;width:31px;height:27px"></div><div class="btn" style="left:349px;top:716px;width:31px;height:27px"></div><div class="btn" style="left:384px;top:716px;width:31px;height:27px"></div><svg class="a" style="left:240px;top:722px" width="15" height="15" viewBox="0 0 15 15"><path d="M7.5 0V15M0 7.5H15" stroke="#fff" stroke-width="2.2"/></svg><svg class="a" style="left:275px;top:721px" width="15" height="16" viewBox="0 0 15 16"><path d="M5 0.8h5v1.6h4.5v1.8h-14v-1.8h4.5z" fill="#fff"/><path d="M1.5 5h12l-0.8 9.5a1.6 1.6 0 0 1-1.6 1.5h-7.2a1.6 1.6 0 0 1-1.6-1.5z" fill="#fff"/><path d="M5 7v6.5M7.5 7v6.5M10 7v6.5" stroke="#3c404b" stroke-width="1"/></svg><div class="a" style="left:302px;top:718px;width:1px;height:23px;background:#1b1c22"></div><svg class="a" style="left:315px;top:721px" width="16" height="16" viewBox="2 2 20 20"><path fill="#fff" d="M19.14 12.94c.04-.3.06-.61.06-.94 0-.32-.02-.64-.07-.94l2.03-1.58a.49.49 0 0 0 .12-.61l-1.92-3.32a.49.49 0 0 0-.59-.22l-2.39.96c-.5-.38-1.03-.7-1.62-.94l-.36-2.54a.48.48 0 0 0-.48-.41h-3.84c-.24 0-.43.17-.47.41l-.36 2.54c-.59.24-1.13.57-1.62.94l-2.39-.96a.48.48 0 0 0-.59.22L2.74 8.87c-.12.21-.08.47.12.61l2.03 1.58c-.05.3-.09.63-.09.94s.02.64.07.94l-2.03 1.58a.49.49 0 0 0-.12.61l1.92 3.32c.12.22.37.29.59.22l2.39-.96c.5.38 1.03.7 1.62.94l.36 2.54c.05.24.24.41.48.41h3.84c.24 0 .44-.17.47-.41l.36-2.54c.59-.24 1.13-.56 1.62-.94l2.39.96c.22.08.47 0 .59-.22l1.92-3.32c.12-.22.07-.47-.12-.61l-2.01-1.58z"/><circle cx="12" cy="12" r="3.6" fill="#3c404b"/></svg><div class="a" style="left:343px;top:718px;width:1px;height:23px;background:#1b1c22"></div><svg class="a" style="left:357px;top:725px" width="16" height="9" viewBox="0 0 16 9"><path d="M1 8L8 1.5L15 8" fill="none" stroke="#fff" stroke-width="2"/></svg><svg class="a" style="left:392px;top:725px" width="16" height="9" viewBox="0 0 16 9"><path d="M1 1L8 7.5L15 1" fill="none" stroke="#fff" stroke-width="2"/></svg><div class="dock" style="left:448px;width:285px"><div class="dt"></div><div class="dtt" style="left:11px">混音器</div></div><svg class="a" style="left:713px;top:499px" width="17" height="17" viewBox="0 0 17 17"><rect x="0.8" y="0.8" width="10" height="8.5" rx="1" fill="none" stroke="#fff" stroke-width="1.2"/><rect x="0.8" y="0.8" width="10" height="2" fill="#fff"/><rect x="5.8" y="6.5" width="10.4" height="9.7" rx="1" fill="#3c404b" stroke="#fff" stroke-width="1.2"/><rect x="5.8" y="6.5" width="10.4" height="2" fill="#fff"/></svg><div class="t" style="left:454px;top:530px;font-size:13px;color:#fff;line-height:14px;">麦克风/Aux</div><div class="t" style="left:626px;top:530px;width:100px;text-align:right;font-size:13px;color:#fff;line-height:14px">0.0 dB</div><div class="a" style="left:454px;top:548px;width:3px;height:3px;background:#4a8a2a"></div><div class="a" style="left:459px;top:548px;width:166px;height:3px;background:#5b5b5e"></div><div class="a" style="left:625px;top:548px;width:3px;height:3px;background:#a0a0a2"></div><div class="a" style="left:628px;top:548px;width:10px;height:3px;background:#5b5b5e"></div><div class="a" style="left:638px;top:548px;width:49px;height:3px;background:#7b7b7d"></div><div class="a" style="left:687px;top:548px;width:40px;height:3px;background:#3f4044"></div><div class="a" style="left:454px;top:552px;width:3px;height:3px;background:#4a8a2a"></div><div class="a" style="left:459px;top:552px;width:166px;height:3px;background:#5b5b5e"></div><div class="a" style="left:625px;top:552px;width:3px;height:3px;background:#a0a0a2"></div><div class="a" style="left:628px;top:552px;width:10px;height:3px;background:#5b5b5e"></div><div class="a" style="left:638px;top:552px;width:49px;height:3px;background:#7b7b7d"></div><div class="a" style="left:687px;top:552px;width:40px;height:3px;background:#3f4044"></div><div class="a" style="left:459px;top:555px;width:268px;height:2px;background:repeating-linear-gradient(90deg,#8a8c90 0 1px,transparent 1px 4.44px)"></div><div class="a" style="left:460.0px;top:555px;width:1px;height:3.5px;background:#e6e6e6"></div><div class="t" style="left:444.0px;top:557px;width:30px;text-align:center;font-size:10px;letter-spacing:-0.4px;color:#fff;line-height:10px">-60</div><div class="a" style="left:482.2px;top:555px;width:1px;height:3.5px;background:#e6e6e6"></div><div class="t" style="left:466.2px;top:557px;width:30px;text-align:center;font-size:10px;letter-spacing:-0.4px;color:#fff;line-height:10px">-55</div><div class="a" style="left:504.4px;top:555px;width:1px;height:3.5px;background:#e6e6e6"></div><div class="t" style="left:488.4px;top:557px;width:30px;text-align:center;font-size:10px;letter-spacing:-0.4px;color:#fff;line-height:10px">-50</div><div class="a" style="left:526.6px;top:555px;width:1px;height:3.5px;background:#e6e6e6"></div><div class="t" style="left:510.6px;top:557px;width:30px;text-align:center;font-size:10px;letter-spacing:-0.4px;color:#fff;line-height:10px">-45</div><div class="a" style="left:548.8px;top:555px;width:1px;height:3.5px;background:#e6e6e6"></div><div class="t" style="left:532.8px;top:557px;width:30px;text-align:center;font-size:10px;letter-spacing:-0.4px;color:#fff;line-height:10px">-40</div><div class="a" style="left:571.0px;top:555px;width:1px;height:3.5px;background:#e6e6e6"></div><div class="t" style="left:555.0px;top:557px;width:30px;text-align:center;font-size:10px;letter-spacing:-0.4px;color:#fff;line-height:10px">-35</div><div class="a" style="left:593.2px;top:555px;width:1px;height:3.5px;background:#e6e6e6"></div><div class="t" style="left:577.2px;top:557px;width:30px;text-align:center;font-size:10px;letter-spacing:-0.4px;color:#fff;line-height:10px">-30</div><div class="a" style="left:615.4px;top:555px;width:1px;height:3.5px;background:#e6e6e6"></div><div class="t" style="left:599.4px;top:557px;width:30px;text-align:center;font-size:10px;letter-spacing:-0.4px;color:#fff;line-height:10px">-25</div><div class="a" style="left:637.6px;top:555px;width:1px;height:3.5px;background:#e6e6e6"></div><div class="t" style="left:621.6px;top:557px;width:30px;text-align:center;font-size:10px;letter-spacing:-0.4px;color:#fff;line-height:10px">-20</div><div class="a" style="left:659.8px;top:555px;width:1px;height:3.5px;background:#e6e6e6"></div><div class="t" style="left:643.8px;top:557px;width:30px;text-align:center;font-size:10px;letter-spacing:-0.4px;color:#fff;line-height:10px">-15</div><div class="a" style="left:682.0px;top:555px;width:1px;height:3.5px;background:#e6e6e6"></div><div class="t" style="left:666.0px;top:557px;width:30px;text-align:center;font-size:10px;letter-spacing:-0.4px;color:#fff;line-height:10px">-10</div><div class="a" style="left:704.2px;top:555px;width:1px;height:3.5px;background:#e6e6e6"></div><div class="t" style="left:688.2px;top:557px;width:30px;text-align:center;font-size:10px;letter-spacing:-0.4px;color:#fff;line-height:10px">-5</div><div class="a" style="left:726.4px;top:555px;width:1px;height:3.5px;background:#e6e6e6"></div><div class="t" style="left:696.9px;top:557px;width:30px;text-align:right;font-size:10px;color:#fff;line-height:10px">0</div><div class="a" style="left:454px;top:579px;width:186px;height:4px;background:#2f7fd8;border-radius:2px"></div><div class="a" style="left:640px;top:579px;width:18px;height:4px;background:#3a3d45;border-radius:2px"></div><div class="a" style="left:640px;top:577px;width:18px;height:8.5px;background:#fff;border-radius:4px"></div><svg class="a" style="left:664px;top:574px" width="16" height="14" viewBox="0 0 16 14"><path d="M0 4.5h3l5-4.5v14l-5-4.5h-3z" fill="#c4262e"/><path d="M10 4.5l5 5M15 4.5l-5 5" stroke="#c4262e" stroke-width="1.8"/></svg><div class="btn" style="left:693px;top:568px;width:31px;height:26px"></div><svg class="a" style="left:706px;top:573px" width="6" height="16" viewBox="0 0 6 16"><circle cx="3" cy="2.5" r="2.2" fill="#fff"/><circle cx="3" cy="8.0" r="2.2" fill="#fff"/><circle cx="3" cy="13.5" r="2.2" fill="#fff"/></svg><div class="t" style="left:454px;top:605px;font-size:13px;color:#fff;line-height:14px;">桌面音频</div><div class="t" style="left:626px;top:605px;width:100px;text-align:right;font-size:13px;color:#fff;line-height:14px">-0.4 dB</div><div class="a" style="left:454px;top:623px;width:3px;height:3px;background:#4a8a2a"></div><div class="a" style="left:459px;top:623px;width:166px;height:3px;background:#5b5b5e"></div><div class="a" style="left:625px;top:623px;width:3px;height:3px;background:#5b5b5e"></div><div class="a" style="left:628px;top:623px;width:10px;height:3px;background:#5b5b5e"></div><div class="a" style="left:638px;top:623px;width:49px;height:3px;background:#7b7b7d"></div><div class="a" style="left:687px;top:623px;width:40px;height:3px;background:#3f4044"></div><div class="a" style="left:454px;top:627px;width:3px;height:3px;background:#4a8a2a"></div><div class="a" style="left:459px;top:627px;width:166px;height:3px;background:#5b5b5e"></div><div class="a" style="left:625px;top:627px;width:3px;height:3px;background:#5b5b5e"></div><div class="a" style="left:628px;top:627px;width:10px;height:3px;background:#5b5b5e"></div><div class="a" style="left:638px;top:627px;width:49px;height:3px;background:#7b7b7d"></div><div class="a" style="left:687px;top:627px;width:40px;height:3px;background:#3f4044"></div><div class="a" style="left:459px;top:630px;width:268px;height:2px;background:repeating-linear-gradient(90deg,#8a8c90 0 1px,transparent 1px 4.44px)"></div><div class="a" style="left:460.0px;top:630px;width:1px;height:3.5px;background:#e6e6e6"></div><div class="t" style="left:444.0px;top:632px;width:30px;text-align:center;font-size:10px;letter-spacing:-0.4px;color:#fff;line-height:10px">-60</div><div class="a" style="left:482.2px;top:630px;width:1px;height:3.5px;background:#e6e6e6"></div><div class="t" style="left:466.2px;top:632px;width:30px;text-align:center;font-size:10px;letter-spacing:-0.4px;color:#fff;line-height:10px">-55</div><div class="a" style="left:504.4px;top:630px;width:1px;height:3.5px;background:#e6e6e6"></div><div class="t" style="left:488.4px;top:632px;width:30px;text-align:center;font-size:10px;letter-spacing:-0.4px;color:#fff;line-height:10px">-50</div><div class="a" style="left:526.6px;top:630px;width:1px;height:3.5px;background:#e6e6e6"></div><div class="t" style="left:510.6px;top:632px;width:30px;text-align:center;font-size:10px;letter-spacing:-0.4px;color:#fff;line-height:10px">-45</div><div class="a" style="left:548.8px;top:630px;width:1px;height:3.5px;background:#e6e6e6"></div><div class="t" style="left:532.8px;top:632px;width:30px;text-align:center;font-size:10px;letter-spacing:-0.4px;color:#fff;line-height:10px">-40</div><div class="a" style="left:571.0px;top:630px;width:1px;height:3.5px;background:#e6e6e6"></div><div class="t" style="left:555.0px;top:632px;width:30px;text-align:center;font-size:10px;letter-spacing:-0.4px;color:#fff;line-height:10px">-35</div><div class="a" style="left:593.2px;top:630px;width:1px;height:3.5px;background:#e6e6e6"></div><div class="t" style="left:577.2px;top:632px;width:30px;text-align:center;font-size:10px;letter-spacing:-0.4px;color:#fff;line-height:10px">-30</div><div class="a" style="left:615.4px;top:630px;width:1px;height:3.5px;background:#e6e6e6"></div><div class="t" style="left:599.4px;top:632px;width:30px;text-align:center;font-size:10px;letter-spacing:-0.4px;color:#fff;line-height:10px">-25</div><div class="a" style="left:637.6px;top:630px;width:1px;height:3.5px;background:#e6e6e6"></div><div class="t" style="left:621.6px;top:632px;width:30px;text-align:center;font-size:10px;letter-spacing:-0.4px;color:#fff;line-height:10px">-20</div><div class="a" style="left:659.8px;top:630px;width:1px;height:3.5px;background:#e6e6e6"></div><div class="t" style="left:643.8px;top:632px;width:30px;text-align:center;font-size:10px;letter-spacing:-0.4px;color:#fff;line-height:10px">-15</div><div class="a" style="left:682.0px;top:630px;width:1px;height:3.5px;background:#e6e6e6"></div><div class="t" style="left:666.0px;top:632px;width:30px;text-align:center;font-size:10px;letter-spacing:-0.4px;color:#fff;line-height:10px">-10</div><div class="a" style="left:704.2px;top:630px;width:1px;height:3.5px;background:#e6e6e6"></div><div class="t" style="left:688.2px;top:632px;width:30px;text-align:center;font-size:10px;letter-spacing:-0.4px;color:#fff;line-height:10px">-5</div><div class="a" style="left:726.4px;top:630px;width:1px;height:3.5px;background:#e6e6e6"></div><div class="t" style="left:696.9px;top:632px;width:30px;text-align:right;font-size:10px;color:#fff;line-height:10px">0</div><div class="a" style="left:454px;top:654px;width:182px;height:4px;background:#2f7fd8;border-radius:2px"></div><div class="a" style="left:636px;top:654px;width:22px;height:4px;background:#3a3d45;border-radius:2px"></div><div class="a" style="left:636px;top:652px;width:18px;height:8.5px;background:#fff;border-radius:4px"></div><svg class="a" style="left:664px;top:649px" width="16" height="14" viewBox="0 0 16 14"><path d="M0 4.5h3l5-4.5v14l-5-4.5h-3z" fill="#c4262e"/><path d="M10 4.5l5 5M15 4.5l-5 5" stroke="#c4262e" stroke-width="1.8"/></svg><div class="btn" style="left:693px;top:643px;width:31px;height:26px"></div><svg class="a" style="left:706px;top:648px" width="6" height="16" viewBox="0 0 6 16"><circle cx="3" cy="2.5" r="2.2" fill="#fff"/><circle cx="3" cy="8.0" r="2.2" fill="#fff"/><circle cx="3" cy="13.5" r="2.2" fill="#fff"/></svg><div class="btn" style="left:455px;top:716px;width:31px;height:27px"></div><div class="a" style="left:490px;top:719px;width:1px;height:21px;background:#1b1c22"></div><div class="btn" style="left:496px;top:716px;width:31px;height:27px"></div><svg class="a" style="left:462px;top:724px" width="11" height="11" viewBox="2 2 20 20"><path fill="#fff" d="M19.14 12.94c.04-.3.06-.61.06-.94 0-.32-.02-.64-.07-.94l2.03-1.58a.49.49 0 0 0 .12-.61l-1.92-3.32a.49.49 0 0 0-.59-.22l-2.39.96c-.5-.38-1.03-.7-1.62-.94l-.36-2.54a.48.48 0 0 0-.48-.41h-3.84c-.24 0-.43.17-.47.41l-.36 2.54c-.59.24-1.13.57-1.62.94l-2.39-.96a.48.48 0 0 0-.59.22L2.74 8.87c-.12.21-.08.47.12.61l2.03 1.58c-.05.3-.09.63-.09.94s.02.64.07.94l-2.03 1.58a.49.49 0 0 0-.12.61l1.92 3.32c.12.22.37.29.59.22l2.39-.96c.5.38 1.03.7 1.62.94l.36 2.54c.05.24.24.41.48.41h3.84c.24 0 .44-.17.47-.41l.36-2.54c.59-.24 1.13-.56 1.62-.94l2.39.96c.22.08.47 0 .59-.22l1.92-3.32c.12-.22.07-.47-.12-.61l-2.01-1.58z"/><circle cx="12" cy="12" r="3.6" fill="#3c404b"/></svg><svg class="a" style="left:472px;top:719px" width="8" height="8" viewBox="2 2 20 20"><path fill="#fff" d="M19.14 12.94c.04-.3.06-.61.06-.94 0-.32-.02-.64-.07-.94l2.03-1.58a.49.49 0 0 0 .12-.61l-1.92-3.32a.49.49 0 0 0-.59-.22l-2.39.96c-.5-.38-1.03-.7-1.62-.94l-.36-2.54a.48.48 0 0 0-.48-.41h-3.84c-.24 0-.43.17-.47.41l-.36 2.54c-.59.24-1.13.57-1.62.94l-2.39-.96a.48.48 0 0 0-.59.22L2.74 8.87c-.12.21-.08.47.12.61l2.03 1.58c-.05.3-.09.63-.09.94s.02.64.07.94l-2.03 1.58a.49.49 0 0 0-.12.61l1.92 3.32c.12.22.37.29.59.22l2.39-.96c.5.38 1.03.7 1.62.94l.36 2.54c.05.24.24.41.48.41h3.84c.24 0 .44-.17.47-.41l.36-2.54c.59-.24 1.13-.56 1.62-.94l2.39.96c.22.08.47 0 .59-.22l1.92-3.32c.12-.22.07-.47-.12-.61l-2.01-1.58z"/><circle cx="12" cy="12" r="3.6" fill="#3c404b"/></svg><svg class="a" style="left:508px;top:721px" width="6" height="16" viewBox="0 0 6 16"><circle cx="3" cy="2.5" r="2.2" fill="#fff"/><circle cx="3" cy="8.0" r="2.2" fill="#fff"/><circle cx="3" cy="13.5" r="2.2" fill="#fff"/></svg><div class="dock" style="left:737px;width:132px"><div class="dt"></div><div class="dtt" style="left:11px">转场动画</div></div><svg class="a" style="left:849px;top:499px" width="17" height="17" viewBox="0 0 17 17"><rect x="0.8" y="0.8" width="10" height="8.5" rx="1" fill="none" stroke="#fff" stroke-width="1.2"/><rect x="0.8" y="0.8" width="10" height="2" fill="#fff"/><rect x="5.8" y="6.5" width="10.4" height="9.7" rx="1" fill="#3c404b" stroke="#fff" stroke-width="1.2"/><rect x="5.8" y="6.5" width="10.4" height="2" fill="#fff"/></svg><div class="btn" style="left:744px;top:528px;width:118px;height:28px"></div><div class="a" style="left:841px;top:528px;width:1px;height:28px;background:#23252d"></div><div class="t" style="left:754px;top:535px;font-size:13px;color:#fff;line-height:14px;">淡入淡出</div><svg class="a" style="left:847px;top:535px" width="8" height="14" viewBox="0 0 8 14"><path d="M1 5L4 2L7 5M1 9L4 12L7 9" fill="none" stroke="#fff" stroke-width="1.2"/></svg><div class="t" style="left:742px;top:570px;font-size:13px;color:#fff;line-height:14px;">时长</div><div class="btn" style="left:772px;top:562px;width:89px;height:31px"></div><div class="t" style="left:781px;top:570px;font-size:13px;color:#fff;line-height:14px;">300 ms</div><svg class="a" style="left:845px;top:567px" width="9" height="21" viewBox="0 0 9 21"><path d="M1 5L4.5 1.5L8 5M1 15.5L4.5 19L8 15.5" fill="none" stroke="#fff" stroke-width="1.2"/></svg><div class="btn" style="left:750px;top:598px;width:32px;height:26px"></div><svg class="a" style="left:759px;top:604px" width="14" height="14" viewBox="0 0 14 14"><path d="M7.0 0V14M0 7.0H14" stroke="#fff" stroke-width="2"/></svg><div class="btn" style="left:790px;top:598px;width:32px;height:26px;background:#1d1e25"></div><svg class="a" style="left:798px;top:603px" width="15" height="16" viewBox="0 0 15 16"><path d="M5 0.8h5v1.6h4.5v1.8h-14v-1.8h4.5z" fill="#fff"/><path d="M1.5 5h12l-0.8 9.5a1.6 1.6 0 0 1-1.6 1.5h-7.2a1.6 1.6 0 0 1-1.6-1.5z" fill="#fff"/><path d="M5 7v6.5M7.5 7v6.5M10 7v6.5" stroke="#1d1e25" stroke-width="1"/></svg><div class="btn" style="left:830px;top:598px;width:32px;height:26px;background:#1d1e25"></div><svg class="a" style="left:843px;top:603px" width="6" height="16" viewBox="0 0 6 16"><circle cx="3" cy="2.5" r="2.2" fill="#fff"/><circle cx="3" cy="8.0" r="2.2" fill="#fff"/><circle cx="3" cy="13.5" r="2.2" fill="#fff"/></svg><div class="dock" style="left:873px;width:203px"><div class="dt"></div><div class="dtt" style="left:11px">控制按钮</div></div><svg class="a" style="left:1056px;top:499px" width="17" height="17" viewBox="0 0 17 17"><rect x="0.8" y="0.8" width="10" height="8.5" rx="1" fill="none" stroke="#fff" stroke-width="1.2"/><rect x="0.8" y="0.8" width="10" height="2" fill="#fff"/><rect x="5.8" y="6.5" width="10.4" height="9.7" rx="1" fill="#3c404b" stroke="#fff" stroke-width="1.2"/><rect x="5.8" y="6.5" width="10.4" height="2" fill="#fff"/></svg><div class="btn" style="left:878px;top:527px;width:194px;height:38px;background:#3c404b"></div><div class="t" style="left:878px;top:539px;width:194px;text-align:center;font-size:13px;color:#fff;line-height:14px">开始直播</div><div class="btn" style="left:878px;top:569px;width:194px;height:38px;background:#3c404b"></div><div class="t" style="left:878px;top:581px;width:194px;text-align:center;font-size:13px;color:#fff;line-height:14px">开始录制</div><div class="btn" style="left:878px;top:611px;width:160px;height:30px;background:#3c404b"></div><div class="t" style="left:878px;top:619px;width:160px;text-align:center;font-size:13px;color:#fff;line-height:14px">启动虚拟摄像机</div><div class="btn" style="left:878px;top:645px;width:194px;height:30px;background:#284cb8"></div><div class="t" style="left:878px;top:653px;width:194px;text-align:center;font-size:13px;color:#fff;line-height:14px">工作室模式</div><div class="btn" style="left:878px;top:679px;width:194px;height:30px;background:#3c404b"></div><div class="t" style="left:878px;top:687px;width:194px;text-align:center;font-size:13px;color:#fff;line-height:14px">设置</div><div class="btn" style="left:878px;top:713px;width:194px;height:30px;background:#3c404b"></div><div class="t" style="left:878px;top:721px;width:194px;text-align:center;font-size:13px;color:#fff;line-height:14px">退出</div><div class="btn" style="left:1042px;top:611px;width:30px;height:30px"></div><svg class="a" style="left:1049px;top:618px" width="16" height="16" viewBox="2 2 20 20"><path fill="#fff" d="M19.14 12.94c.04-.3.06-.61.06-.94 0-.32-.02-.64-.07-.94l2.03-1.58a.49.49 0 0 0 .12-.61l-1.92-3.32a.49.49 0 0 0-.59-.22l-2.39.96c-.5-.38-1.03-.7-1.62-.94l-.36-2.54a.48.48 0 0 0-.48-.41h-3.84c-.24 0-.43.17-.47.41l-.36 2.54c-.59.24-1.13.57-1.62.94l-2.39-.96a.48.48 0 0 0-.59.22L2.74 8.87c-.12.21-.08.47.12.61l2.03 1.58c-.05.3-.09.63-.09.94s.02.64.07.94l-2.03 1.58a.49.49 0 0 0-.12.61l1.92 3.32c.12.22.37.29.59.22l2.39-.96c.5.38 1.03.7 1.62.94l.36 2.54c.05.24.24.41.48.41h3.84c.24 0 .44-.17.47-.41l.36-2.54c.59-.24 1.13-.56 1.62-.94l2.39.96c.22.08.47 0 .59-.22l1.92-3.32c.12-.22.07-.47-.12-.61l-2.01-1.58z"/><circle cx="12" cy="12" r="3.6" fill="#3c404b"/></svg>
<div class="a" style="left:2px;top:752px;width:1075px;height:25px;background:#2b2e38;border-top:1px solid #3a3d47"></div><div class="a" style="left:597px;top:753px;width:1px;height:24px;background:#3a3d47"></div><div class="a" style="left:638px;top:753px;width:1px;height:24px;background:#3a3d47"></div><div class="a" style="left:737px;top:753px;width:1px;height:24px;background:#3a3d47"></div><div class="a" style="left:836px;top:753px;width:1px;height:24px;background:#3a3d47"></div><div class="a" style="left:924px;top:753px;width:1px;height:24px;background:#3a3d47"></div><svg class="a" style="left:610px;top:759px" width="16" height="15" viewBox="0 0 16 15"><rect x="0" y="11" width="3" height="4" fill="#6a6c72"/><rect x="4" y="8" width="3" height="7" fill="#6a6c72"/><rect x="8" y="4" width="3" height="11" fill="#6a6c72"/><rect x="12" y="0" width="3" height="15" fill="#6a6c72"/></svg><svg class="a" style="left:651px;top:760px" width="16" height="14" viewBox="0 0 16 14"><circle cx="8" cy="7" r="2.6" fill="#777980"/><path d="M4.6 3.2a5 5 0 0 0 0 7.6M11.4 3.2a5 5 0 0 1 0 7.6" fill="none" stroke="#5e6066" stroke-width="1.3"/><path d="M2.2 1a8 8 0 0 0 0 12M13.8 1a8 8 0 0 1 0 12" fill="none" stroke="#4a4c52" stroke-width="1.2"/></svg><div class="t" style="left:673px;top:761px;font-size:13px;color:#8b8d94;line-height:14px">00:00:00</div><div class="a" style="left:751px;top:760px;width:14px;height:14px;border-radius:50%;background:#5e6066"></div><div class="t" style="left:773px;top:761px;font-size:13px;color:#8b8d94;line-height:14px">00:00:00</div><div class="t" style="left:849px;top:761px;font-size:13px;color:#fff;line-height:14px">CPU: 1.3%</div><div class="t" style="left:936px;top:761px;font-size:13px;color:#fff;line-height:14px">30.00 / 30.00 FPS</div><svg class="a" style="left:1066px;top:765px" width="10" height="10" viewBox="0 0 10 10"><g fill="#6a6c72"><rect x="7" y="1" width="2" height="2"/><rect x="4" y="4" width="2" height="2"/><rect x="7" y="4" width="2" height="2"/><rect x="1" y="7" width="2" height="2"/><rect x="4" y="7" width="2" height="2"/><rect x="7" y="7" width="2" height="2"/></g></svg>
</body></html>
